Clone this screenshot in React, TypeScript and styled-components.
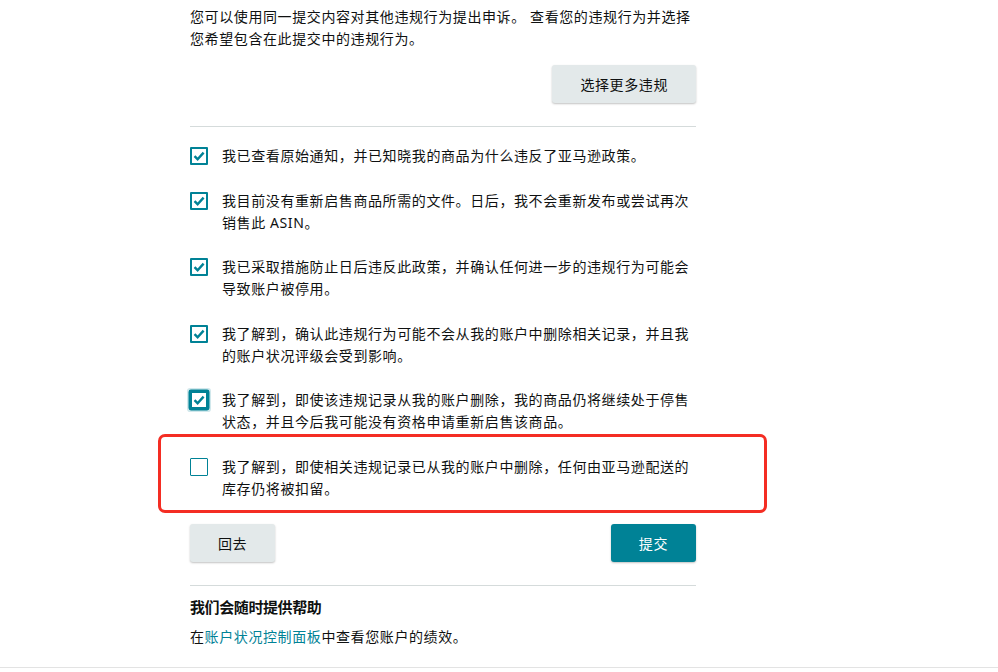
import React, { useState } from 'react';
import styled, { createGlobalStyle } from 'styled-components';

const GlobalStyle = createGlobalStyle`
	html {
		overflow: hidden;
	}
	body {
		margin: 0;
		background: #fff;
		color: #0f1111;
		font-family: 'Noto Sans', 'Noto Sans CJK SC', sans-serif;
		font-size: 14px;
	}
`;

const items = [
	'我已查看原始通知，并已知晓我的商品为什么违反了亚马逊政策。',
	'我目前没有重新启售商品所需的文件。日后，我不会重新发布或尝试再次销售此 ASIN。',
	'我已采取措施防止日后违反此政策，并确认任何进一步的违规行为可能会导致账户被停用。',
	'我了解到，确认此违规行为可能不会从我的账户中删除相关记录，并且我的账户状况评级会受到影响。',
	'我了解到，即使该违规记录从我的账户删除，我的商品仍将继续处于停售状态，并且今后我可能没有资格申请重新启售该商品。',
	'我了解到，即使相关违规记录已从我的账户中删除，任何由亚马逊配送的库存仍将被扣留。',
];

const App = (): React.FunctionComponentElement<JSX.Element> => {
	const [checked, setChecked] = useState([true, true, true, true, true, false]);
	const focused = 4;
	const highlighted = 5;

	const toggle = (index: number): void => {
		setChecked(prev => prev.map((value, i) => (i === index ? !value : value)));
	};

	return (
		<Page>
			<GlobalStyle />
			<Main>
				<Intro>您可以使用同一提交内容对其他违规行为提出申诉。 查看您的违规行为并选择您希望包含在此提交中的违规行为。</Intro>
				<TopRow>
					<Button>选择更多违规</Button>
				</TopRow>
				<Divider />
				<CheckList>
					{items.map((text, index) => (
						<Item key={index} onClick={() => toggle(index)}>
							<Box $checked={checked[index]} $focused={index === focused}>
								{checked[index] && (
									<svg width='14' height='14' viewBox='0 0 14 14'>
										<polyline points='2.5,7.2 5.6,10.2 11.6,3.6' fill='none' stroke='#008296' strokeWidth='2.4' />
									</svg>
								)}
							</Box>
							<ItemText>{text}</ItemText>
							{index === highlighted && <Highlight />}
						</Item>
					))}
				</CheckList>
				<ActionRow>
					<Button>回去</Button>
					<Button $primary>提交</Button>
				</ActionRow>
				<Divider $gap={23} />
				<HelpTitle>我们会随时提供帮助</HelpTitle>
				<HelpText>
					在<Link href='#'>账户状况控制面板</Link>中查看您账户的绩效。
				</HelpText>
			</Main>
			<PageFooter />
		</Page>
	);
};

const Page = styled.div`
	min-height: 672px;
	display: flex;
	flex-direction: column;
`;

const Main = styled.main`
	width: 506px;
	margin-left: 190px;
	padding-top: 6px;
	letter-spacing: 0.6px;
`;

const Intro = styled.p`
	margin: 0;
	line-height: 22px;
`;

const TopRow = styled.div`
	display: flex;
	justify-content: flex-end;
	margin-top: 15px;
`;

const Button = styled.button<{ $primary?: boolean }>`
	height: 38px;
	padding: 0 28px;
	border: none;
	border-radius: 3px;
	font-family: inherit;
	font-size: 14px;
	letter-spacing: 0.6px;
	cursor: pointer;
	background: ${p => (p.$primary ? '#008296' : '#e3e9ea')};
	color: ${p => (p.$primary ? '#fff' : '#0f1111')};
	box-shadow: 0 1px 2px rgba(15, 17, 17, 0.25);
`;

const Divider = styled.hr<{ $gap?: number }>`
	margin: ${p => p.$gap ?? 23}px 0 0;
	border: none;
	height: 1px;
	background: #d5dbdb;
`;

const CheckList = styled.div`
	display: flex;
	flex-direction: column;
	gap: 22.5px;
	margin-top: 18px;
`;

const Item = styled.label`
	position: relative;
	display: flex;
	align-items: flex-start;
	gap: 14px;
	cursor: pointer;
`;

const Box = styled.span<{ $checked: boolean; $focused: boolean }>`
	flex: none;
	box-sizing: border-box;
	width: 18px;
	height: 18px;
	margin-top: 2px;
	display: flex;
	align-items: center;
	justify-content: center;
	border: ${p => (p.$checked ? 2 : 1.5)}px solid #008296;
	border-radius: 1px;
	background: #fff;
	box-shadow: ${p => (p.$focused ? '0 0 0 1.5px #008296, 0 0 0 3px rgba(0, 130, 150, 0.18)' : 'none')};
`;

const ItemText = styled.span`
	line-height: 22px;
`;

const Highlight = styled.span`
	position: absolute;
	top: -22px;
	bottom: -13px;
	left: -32px;
	right: -71px;
	border: 3px solid #f42d23;
	border-radius: 7px;
	pointer-events: none;
`;

const ActionRow = styled.div`
	display: flex;
	justify-content: space-between;
	margin-top: 24px;
`;

const HelpTitle = styled.h3`
	margin: 10px 0 0;
	font-size: 15px;
	font-weight: 700;
	line-height: 22px;
	letter-spacing: -0.4px;
`;

const HelpText = styled.p`
	margin: 8px 0 0;
	line-height: 22px;
`;

const Link = styled.a`
	color: #008296;
	text-decoration: none;
`;

const PageFooter = styled.footer`
	margin-top: 19px;
	flex: 1;
	border-top: 1px solid #e3e3e3;
`;

export default App;
